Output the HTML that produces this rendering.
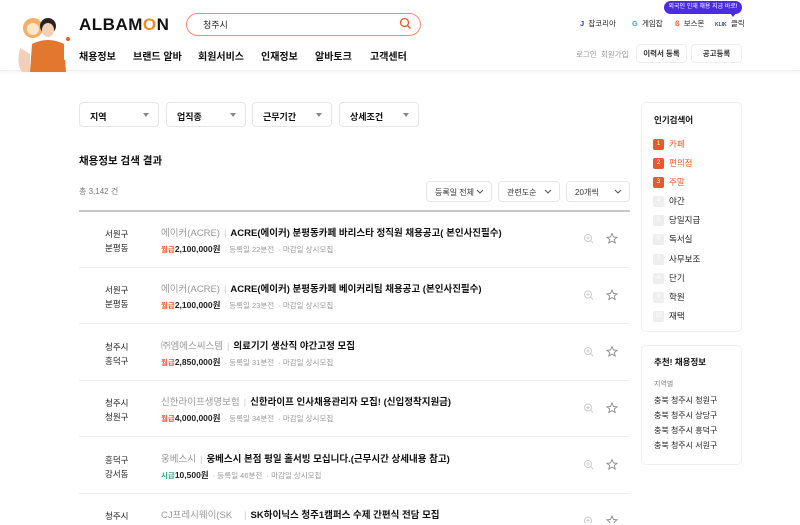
<!DOCTYPE html>
<html><head><meta charset="utf-8"><style>
*{margin:0;padding:0;box-sizing:border-box}
html,body{width:800px;height:525px;overflow:hidden}
body{background:#fff;font-family:"Liberation Sans","Noto Sans CJK KR",sans-serif;color:#111;position:relative}
.a{position:absolute;white-space:nowrap}
.hdr{position:absolute;left:0;top:0;width:800px;height:71px;border-bottom:1px solid #eee;box-shadow:0 2px 3px rgba(0,0,0,.03)}
.nav{font-size:10px;font-weight:bold;top:48px}
.sel{position:absolute;top:102px;height:25px;border:1px solid #e6e6e6;border-radius:4px;font-size:9px;font-weight:bold;padding:7px 10px}
.sel:after{content:"";position:absolute;right:9px;top:10px;border:3px solid transparent;border-top:4px solid #888}
.dd{position:absolute;top:181px;height:21px;border:1px solid #e6e6e6;border-radius:4px;font-size:8px;padding:5px 8px;color:#333}
.dd svg{position:absolute;right:7px;top:7px}
.row{position:absolute;left:79px;width:551px;height:56px;border-bottom:1px solid #eee}
.loc{position:absolute;left:26px;top:15px;font-size:8.5px;line-height:14px;color:#222}
.co{position:absolute;left:82px;top:13px;font-size:9.5px;color:#999;white-space:nowrap}
.co b{color:#111;font-weight:bold;margin-left:4px}
.co i{font-style:normal;color:#ccc;margin-left:4px}
.mt{position:absolute;left:82px;top:31px;font-size:7.5px;color:#999;white-space:nowrap}
.mt b{color:#222;font-size:8.5px}
.mt .m{color:#e9592d;font-weight:bold}
.mt .h{color:#2fb38a;font-weight:bold}
.side{position:absolute;left:641px;width:101px;border:1px solid #f0f0f0;border-radius:5px}
.rk{position:absolute;left:653px;font-size:8.5px;color:#222}
.rk span{display:inline-block;width:11px;height:11px;border-radius:2px;background:#eee;color:#fff;font-size:6px;text-align:center;line-height:11px;margin-right:5px;vertical-align:middle}
.rk.o{color:#e9592d}.rk.o span{background:#e9592d}
</style></head><body>
<div class="hdr"></div>
<svg class="a" style="left:8px;top:14px" width="70" height="58" viewBox="0 0 70 58">
<circle cx="25" cy="14" r="10" fill="#f3b06b"/><circle cx="25" cy="15" r="6" fill="#fde7c9"/>
<circle cx="40" cy="12" r="8" fill="#2b2220"/><ellipse cx="40" cy="16" rx="6" ry="7" fill="#f2d0b8"/>
<path d="M22 58 L24 30 Q40 22 56 30 L58 58Z" fill="#e2772f"/>
<path d="M12 34 Q8 50 14 58 L22 58 L22 40Z" fill="#f2d0b8"/>
<path d="M56 30 Q64 36 62 44 L56 46Z" fill="#fff"/>
<circle cx="60" cy="25" r="2" fill="#e9592d"/>
</svg>
<div class="a" style="left:79px;top:15px;font-size:17px;font-weight:900;letter-spacing:.5px;font-family:'Liberation Sans',sans-serif">ALBAM<span style="color:#f28b1c">O</span>N</div>
<div class="a" style="left:186px;top:13px;width:235px;height:23px;border:1.3px solid #ef8d6c;border-radius:12px"></div>
<div class="a" style="left:203px;top:18px;font-size:9px;color:#222">청주시</div>
<svg class="a" style="left:399px;top:17px" width="13" height="13" viewBox="0 0 13 13"><circle cx="5.5" cy="5.5" r="4" fill="none" stroke="#e9592d" stroke-width="1.3"/><path d="M8.5 8.5L11.5 11.5" stroke="#e9592d" stroke-width="1.3"/></svg>
<div class="a nav" style="left:79px">채용정보</div>
<div class="a nav" style="left:133px">브랜드 알바</div>
<div class="a nav" style="left:198px">회원서비스</div>
<div class="a nav" style="left:261px">인재정보</div>
<div class="a nav" style="left:315px">알바토크</div>
<div class="a nav" style="left:370px">고객센터</div>
<div class="a" style="left:664px;top:1px;width:78px;height:13px;background:#4b2ce0;border-radius:7px;color:#fff;font-size:6px;text-align:center;line-height:13px">외국인 인재 채용 지금 바로!</div>
<div class="a" style="left:730px;top:13px;border:3px solid transparent;border-top:4px solid #4b2ce0"></div>
<div class="a" style="left:580px;top:18px;font-size:7.5px;color:#222"><b style="color:#2a3ab7">J</b>&nbsp; 잡코리아</div>
<div class="a" style="left:632px;top:18px;font-size:7.5px;color:#222"><b style="color:#3aa0e0">G</b>&nbsp; 게임잡</div>
<div class="a" style="left:675px;top:18px;font-size:7.5px;color:#222"><b style="color:#e9592d">ß</b>&nbsp; 보스몬</div>
<div class="a" style="left:715px;top:18px;font-size:7.5px;color:#222"><span style="color:#2a3ab7;font-size:5px;font-weight:bold">KLIK</span>&nbsp; 클릭</div>
<div class="a" style="left:576px;top:49px;font-size:7.5px;color:#999">로그인 &nbsp;회원가입</div>
<div class="a" style="left:636px;top:44px;width:51px;height:19px;border:1px solid #eee;border-radius:4px;font-size:7.5px;text-align:center;line-height:17px;font-weight:bold;color:#333">이력서 등록</div>
<div class="a" style="left:691px;top:44px;width:51px;height:19px;border:1px solid #eee;border-radius:4px;font-size:7.5px;text-align:center;line-height:17px;font-weight:bold;color:#333">공고등록</div>

<div class="sel" style="left:79px;width:80px">지역</div>
<div class="sel" style="left:166px;width:80px">업직종</div>
<div class="sel" style="left:252px;width:80px">근무기간</div>
<div class="sel" style="left:339px;width:80px">상세조건</div>
<div class="a" style="left:79px;top:153px;font-size:10.5px;font-weight:bold">채용정보 검색 결과</div>
<div class="a" style="left:79px;top:186px;font-size:8px;color:#777">총 3,142 건</div>
<div class="dd" style="left:426px;width:66px">등록일 전체<svg width="8" height="6"><path d="M1 1L4 4L7 1" fill="none" stroke="#555" stroke-width="1"/></svg></div>
<div class="dd" style="left:498px;width:62px">관련도순<svg width="8" height="6"><path d="M1 1L4 4L7 1" fill="none" stroke="#555" stroke-width="1"/></svg></div>
<div class="dd" style="left:566px;width:64px">20개씩<svg width="8" height="6"><path d="M1 1L4 4L7 1" fill="none" stroke="#555" stroke-width="1"/></svg></div>
<div class="a" style="left:79px;top:210px;width:551px;height:2px;background:#c8c8c8"></div>

<div class="row" style="top:212px"><div class="loc">서원구<br>분평동</div><div class="co">에이커(ACRE)<i>|</i><b>ACRE(에이커) 분평동카페 바리스타 정직원 채용공고( 본인사진필수)</b></div><div class="mt"><span class="m">월급</span><b>2,100,000원</b> &nbsp;· 등록일 22분전 &nbsp;· 마감일 상시모집</div></div>
<div class="row" style="top:268px"><div class="loc">서원구<br>분평동</div><div class="co">에이커(ACRE)<i>|</i><b>ACRE(에이커) 분평동카페 베이커리팀 채용공고 (본인사진필수)</b></div><div class="mt"><span class="m">월급</span><b>2,100,000원</b> &nbsp;· 등록일 23분전 &nbsp;· 마감일 상시모집</div></div>
<div class="row" style="top:325px"><div class="loc">청주시<br>흥덕구</div><div class="co">㈜엠에스씨스템<i>|</i><b>의료기기 생산직 야간고정 모집</b></div><div class="mt"><span class="m">월급</span><b>2,850,000원</b> &nbsp;· 등록일 31분전 &nbsp;· 마감일 상시모집</div></div>
<div class="row" style="top:381px"><div class="loc">청주시<br>청원구</div><div class="co">신한라이프생명보험<i>|</i><b>신한라이프 인사채용관리자 모집! (신입정착지원금)</b></div><div class="mt"><span class="m">월급</span><b>4,000,000원</b> &nbsp;· 등록일 34분전 &nbsp;· 마감일 상시모집</div></div>
<div class="row" style="top:438px"><div class="loc">흥덕구<br>강서동</div><div class="co">웅베스시<i>|</i><b>웅베스시 본점 평일 홀서빙 모십니다.(근무시간 상세내용 참고)</b></div><div class="mt"><span class="h">시급</span><b>10,500원</b> &nbsp;· 등록일 46분전 &nbsp;· 마감일 상시모집</div></div>
<div class="row" style="top:494px"><div class="loc">청주시<br>서원구</div><div class="co">CJ프레시웨이(SK &nbsp;&nbsp;<i>|</i><b>SK하이닉스 청주1캠퍼스 수제 간편식 전담 모집</b></div></div>

<svg class="a" style="left:583px;top:233px" width="40" height="290" viewBox="0 0 40 290">
<g id="ic"><circle cx="5" cy="5" r="3.5" fill="none" stroke="#ccc"/><path d="M7.5 7.5L10 10M3.5 5H6.5M5 3.5V6.5" stroke="#ccc"/>
<path d="M29 0.5L30.5 4L34 4.3L31.3 6.5L32.2 10L29 8.1L25.8 10L26.7 6.5L24 4.3L27.5 4Z" fill="none" stroke="#888" stroke-width=".9"/></g>
<use href="#ic" y="56.5"/><use href="#ic" y="113"/><use href="#ic" y="169.5"/><use href="#ic" y="226"/><use href="#ic" y="282.5"/>
</svg>

<div class="side" style="top:102px;height:230px"></div>
<div class="a" style="left:654px;top:114px;font-size:8.5px;font-weight:bold">인기검색어</div>
<div class="rk o a" style="top:138px"><span>1</span>카페</div>
<div class="rk o a" style="top:157px"><span>2</span>편의점</div>
<div class="rk o a" style="top:176px"><span>3</span>주말</div>
<div class="rk a" style="top:195px"><span>4</span>야간</div>
<div class="rk a" style="top:214px"><span>5</span>당일지급</div>
<div class="rk a" style="top:233px"><span>6</span>독서실</div>
<div class="rk a" style="top:253px"><span>7</span>사무보조</div>
<div class="rk a" style="top:272px"><span>8</span>단기</div>
<div class="rk a" style="top:291px"><span>9</span>학원</div>
<div class="rk a" style="top:310px"><span>10</span>재택</div>
<div class="side" style="top:345px;height:120px"></div>
<div class="a" style="left:654px;top:356px;font-size:8.5px;font-weight:bold">추천! 채용정보</div>
<div class="a" style="left:654px;top:379px;font-size:7px;color:#888">지역별</div>
<div class="a" style="left:654px;top:395px;font-size:8px;color:#222">충북 청주시 청원구</div>
<div class="a" style="left:654px;top:410px;font-size:8px;color:#222">충북 청주시 상당구</div>
<div class="a" style="left:654px;top:425px;font-size:8px;color:#222">충북 청주시 흥덕구</div>
<div class="a" style="left:654px;top:440px;font-size:8px;color:#222">충북 청주시 서원구</div>
</body></html>
